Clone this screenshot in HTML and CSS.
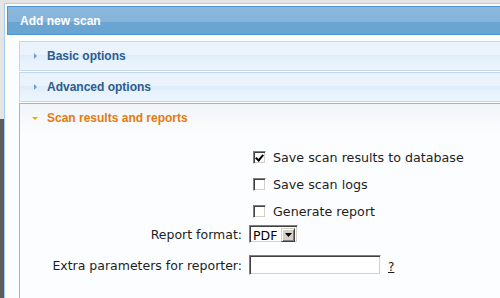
FILE: index.html
```html
<!DOCTYPE html>
<html lang="en">
<head>
    <meta charset="UTF-8">
    <title>Add new scan</title>
    <link rel="stylesheet" href="styles.css">
</head>
<body>
    <div class="frame">
        <div class="panel-title">Add new scan</div>

        <div class="sections">
            <div class="section">
                <div class="section-head">
                    <span class="arrow arrow-right"></span>
                    Basic options
                </div>
            </div>

            <div class="section">
                <div class="section-head">
                    <span class="arrow arrow-right"></span>
                    Advanced options
                </div>
            </div>

            <div class="section section-open">
                <div class="section-head">
                    <span class="arrow arrow-down"></span>
                    Scan results and reports
                </div>
                <div class="section-body">
                    <div class="row row-first">
                        <div class="cell-label"></div>
                        <label class="check"><input type="checkbox" checked> Save scan results to database</label>
                    </div>
                    <div class="row row-check">
                        <div class="cell-label"></div>
                        <label class="check"><input type="checkbox"> Save scan logs</label>
                    </div>
                    <div class="row row-check">
                        <div class="cell-label"></div>
                        <label class="check"><input type="checkbox"> Generate report</label>
                    </div>
                    <div class="row row-format">
                        <label class="cell-label" for="format">Report format:</label>
                        <span class="combo">
                            <select id="format">
                                <option>PDF</option>
                                <option>HTML</option>
                            </select>
                            <span class="combo-btn">
                                <svg width="7" height="4" viewBox="0 0 7 4"><path d="M0 0h7L3.5 4z" fill="#000"/></svg>
                            </span>
                        </span>
                    </div>
                    <div class="row row-extra">
                        <label class="cell-label" for="extra">Extra parameters for reporter:</label>
                        <input type="text" id="extra" class="text-input">
                        <a href="#" class="help">?</a>
                    </div>
                </div>
            </div>
        </div>
    </div>
</body>
</html>
```

FILE: styles.css
```css
* {
    box-sizing: border-box;
}

html, body {
    margin: 0;
    padding: 0;
    height: 100%;
    overflow: hidden;
}

body {
    background: linear-gradient(to bottom, #e4e4e4 0, #e4e4e4 119px, #5c5c5c 119px);
    font-family: "DejaVu Sans", Verdana, sans-serif;
    color: #1e1e1e;
    padding-top: 3px;
}

.frame {
    margin-left: 4px;
    height: 100%;
    background: #fbfdfe;
    border-top: 1px solid #c9c9c9;
    border-left: 1px solid #a5cdea;
    padding: 2px 0 0 2px;
    display: flex;
    flex-direction: column;
}

.panel-title {
    height: 29px;
    flex-shrink: 0;
    border-top: 1px solid #4d94d3;
    border-bottom: 1px solid #4d94d3;
    border-left: 1px solid #4d94d3;
    background: linear-gradient(to bottom, #8ab7dc 0, #86b3da 55%, #6aa5d2 56%, #6aa4d1 100%);
    color: #fff;
    font: bold 12px "Liberation Sans", Arial, sans-serif;
    padding-left: 12px;
    display: flex;
    align-items: center;
}

.sections {
    margin: 6px 0 0 12px;
    flex: 1;
    display: flex;
    flex-direction: column;
}

.section {
    border: 1px solid #c3d8ec;
    border-right: none;
    margin-bottom: 1px;
}

.section-head {
    height: 28px;
    display: flex;
    align-items: center;
    padding-left: 14px;
    font: bold 12px "Liberation Sans", Arial, sans-serif;
    color: #2b5c8e;
    background: linear-gradient(to bottom, #eaf3fc 0, #eaf3fc 45%, #dfedfa 48%, #e7f2fc 70%, #ecf5fd 100%);
}

.arrow {
    display: inline-block;
    width: 0;
    height: 0;
    margin-right: 10px;
}

.arrow-right {
    border-top: 3px solid transparent;
    border-bottom: 3px solid transparent;
    border-left: 3px solid #6b9fcf;
}

.arrow-down {
    border-left: 3px solid transparent;
    border-right: 3px solid transparent;
    border-top: 3px solid #f6a800;
    margin-left: -2px;
    margin-right: 9px;
}

.section-open {
    flex: 1;
    border-color: #8cbbe4;
    border-bottom: none;
    margin-bottom: 0;
    background: #fbfdfe;
}

.section-open .section-head {
    color: #e57a0e;
    background: linear-gradient(to bottom, #f1f5f9 0, #fbfcfd 100%);
}

.section-body {
    padding-top: 16px;
    font-size: 12.5px;
}

.row {
    display: flex;
    align-items: center;
}

.cell-label {
    width: 222px;
    text-align: right;
    margin-right: 7px;
    flex-shrink: 0;
}

.row-check {
    margin-top: 8px;
}

.row-format {
    margin-top: 4px;
}

.row-extra {
    margin-top: 12px;
}

.check {
    font-size: 12.7px;
    display: flex;
    align-items: center;
    white-space: pre;
}

.check input {
    appearance: none;
    -webkit-appearance: none;
    width: 13px;
    height: 13px;
    margin: 3px 3px 3px 4px;
    background: #fff;
    border: 1px solid;
    border-color: #808080 #fff #fff #808080;
    box-shadow: inset 1px 1px #404040, inset -1px -1px #d4d0c8;
    position: relative;
}

.check input:checked::after {
    content: "";
    position: absolute;
    left: 3px;
    top: 1px;
    width: 3px;
    height: 6px;
    border: solid #000;
    border-width: 0 2px 2px 0;
    transform: rotate(40deg);
}

.combo {
    display: flex;
    width: 49px;
    height: 18px;
    border: 1px solid;
    border-color: #808080 #fff #fff #808080;
    box-shadow: inset 1px 1px #404040, inset -1px -1px #d4d0c8;
    background: #fff;
    padding: 2px;
}

.combo select {
    appearance: none;
    -webkit-appearance: none;
    border: none;
    background: transparent;
    font: 12.5px "DejaVu Sans", Verdana, sans-serif;
    color: #000;
    padding: 0 0 0 1px;
    width: 29px;
    height: 14px;
    outline: none;
}

.combo-btn {
    width: 14px;
    height: 14px;
    background: #d4d0c8;
    border: 1px solid;
    border-color: #d4d0c8 #404040 #404040 #d4d0c8;
    box-shadow: inset 1px 1px #fff, inset -1px -1px #808080;
    display: flex;
    align-items: center;
    justify-content: center;
}

.text-input {
    width: 132px;
    height: 20px;
    border: 1px solid;
    border-color: #808080 #fff #fff #808080;
    box-shadow: inset 1px 1px #404040, inset -1px -1px #d4d0c8;
    background: #fff;
    font: 12px "DejaVu Sans", Verdana, sans-serif;
}

.help {
    margin-left: 7px;
    color: #1e1e1e;
    font-size: 12px;
    margin-top: 3px;
}
```
